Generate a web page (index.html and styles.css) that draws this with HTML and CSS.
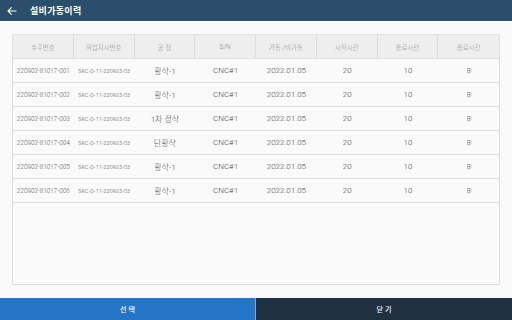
FILE: index.html
```html
<!DOCTYPE html>
<html lang="ko">
<head>
<meta charset="utf-8">
<title>설비가동이력</title>
<link rel="stylesheet" href="styles.css">
</head>
<body>
<div class="app">
  <header class="topbar">
    <svg class="back" width="10" height="10" viewBox="0 0 10 10"><path d="M9.5 5H1M4.6 1.4L1 5l3.6 3.6" fill="none" stroke="#fff" stroke-width="1.1"/></svg>
    <span class="title">설비가동이력</span>
  </header>
  <main class="main">
    <div class="grid">
      <div class="row head">
        <div class="c">수주번호</div>
        <div class="c">작업지시번호</div>
        <div class="c">공 정</div>
        <div class="c">S/N</div>
        <div class="c">가동 /비가동</div>
        <div class="c">시작시간</div>
        <div class="c">종료시간</div>
        <div class="c">종료시간</div>
      </div>
      <div class="row">
        <div class="c s1">220902-81017-001</div><div class="c s2">SKC-D-11-220923-03</div><div class="c">황삭-1</div><div class="c">CNC#1</div><div class="c">2022.01.05</div><div class="c">20</div><div class="c">10</div><div class="c">8</div>
      </div>
      <div class="row">
        <div class="c s1">220902-81017-002</div><div class="c s2">SKC-D-11-220923-03</div><div class="c">황삭-1</div><div class="c">CNC#1</div><div class="c">2022.01.05</div><div class="c">20</div><div class="c">10</div><div class="c">8</div>
      </div>
      <div class="row">
        <div class="c s1">220902-81017-003</div><div class="c s2">SKC-D-11-220923-03</div><div class="c">1차 정삭</div><div class="c">CNC#1</div><div class="c">2022.01.05</div><div class="c">20</div><div class="c">10</div><div class="c">8</div>
      </div>
      <div class="row">
        <div class="c s1">220902-81017-004</div><div class="c s2">SKC-D-11-220923-03</div><div class="c">단황삭</div><div class="c">CNC#1</div><div class="c">2022.01.05</div><div class="c">20</div><div class="c">10</div><div class="c">8</div>
      </div>
      <div class="row">
        <div class="c s1">220902-81017-005</div><div class="c s2">SKC-D-11-220923-03</div><div class="c">황삭-1</div><div class="c">CNC#1</div><div class="c">2022.01.05</div><div class="c">20</div><div class="c">10</div><div class="c">8</div>
      </div>
      <div class="row">
        <div class="c s1">220902-81017-006</div><div class="c s2">SKC-D-11-220923-03</div><div class="c">황삭-1</div><div class="c">CNC#1</div><div class="c">2022.01.05</div><div class="c">20</div><div class="c">10</div><div class="c">8</div>
      </div>
    </div>
  </main>
  <footer class="actions">
    <button class="btn select">선 택</button>
    <button class="btn close">닫 기</button>
  </footer>
</div>
</body>
</html>
```
FILE: styles.css
```css
* { box-sizing: border-box; }
html, body { margin: 0; padding: 0; }
body {
  width: 512px;
  height: 320px;
  overflow: hidden;
  background: #fafafa;
  font-family: "Roboto", "Noto Sans CJK KR", sans-serif;
}
.app {
  display: flex;
  flex-direction: column;
  height: 320px;
}
.topbar {
  height: 21px;
  flex: none;
  background: #2b4e6d;
  display: flex;
  align-items: center;
  padding-left: 7px;
  gap: 13px;
}
.back { display: block; }
.title {
  color: #fff;
  font-family: "Noto Sans CJK KR", sans-serif;
  font-weight: 700;
  font-size: 9px;
  letter-spacing: 0.3px;
}
.main {
  flex: 1;
  padding: 13px 12px 13px 12px;
  display: flex;
}
.grid {
  flex: 1;
  border: 1px solid #dedede;
  border-radius: 1px;
  background: #fafafa;
}
.row {
  display: grid;
  grid-template-columns: repeat(8, 1fr);
  height: 24px;
  border-bottom: 1px solid #e0e0e0;
}
.c {
  display: flex;
  align-items: center;
  justify-content: center;
  font-size: 8px;
  font-weight: 300;
  color: #4a4a4a;
  white-space: nowrap;
}
.head {
  background: #eeeeee;
  height: 24px;
}
.head .c {
  font-size: 6.5px;
  color: #8a8a8a;
  border-right: 1px solid #dcdcdc;
}
.head .c:last-child { border-right: none; }
.c.s1 { font-size: 6.3px; color: #606060; }
.c.s2 { font-size: 5.6px; color: #606060; }
.actions {
  height: 22px;
  flex: none;
  display: grid;
  grid-template-columns: 255px 1px 1fr;
  background: #1f3043;
}
.btn {
  border: none;
  margin: 0;
  padding: 0;
  color: #fff;
  font-family: "Noto Sans CJK KR", sans-serif;
  font-weight: 500;
  font-size: 7px;
}
.select { background: #2575c7; grid-column: 1; border-right: 1px solid #8fa4b8; width: 256px; }
.close { background: #1f3043; grid-column: 3; }
```
